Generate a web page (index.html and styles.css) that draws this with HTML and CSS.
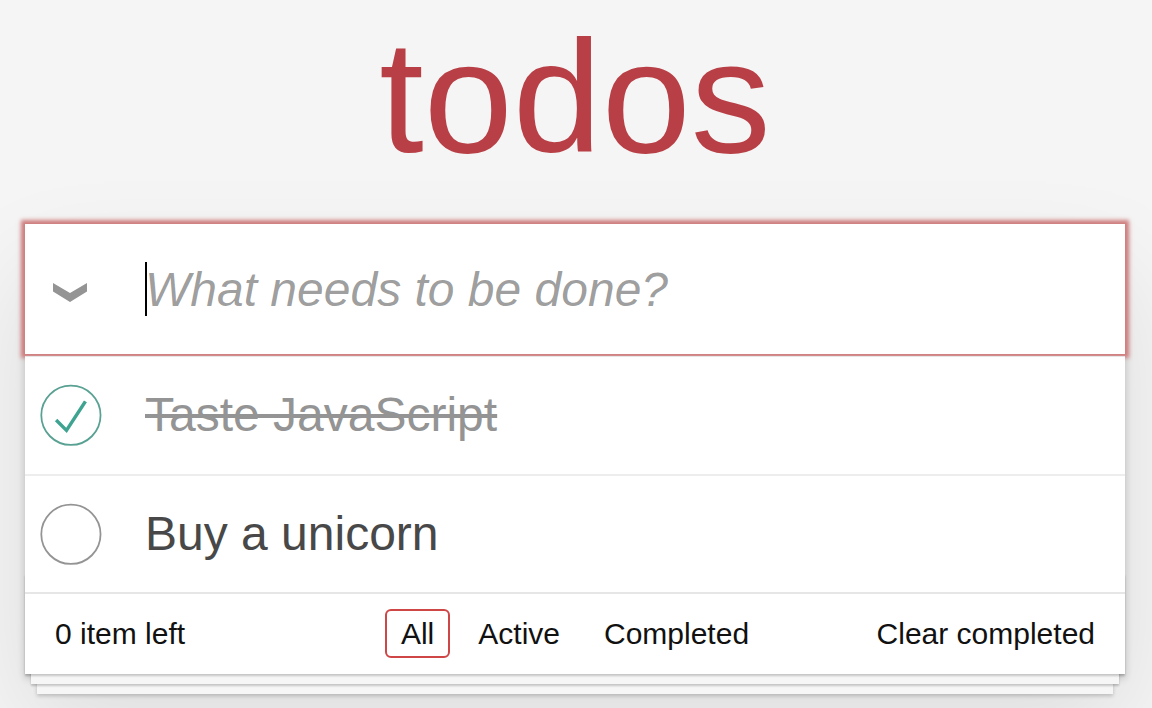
FILE: index.html
```html
<!DOCTYPE html>
<html lang="en">
<head>
<meta charset="utf-8">
<title>TodoMVC</title>
<link rel="stylesheet" href="styles.css">
</head>
<body>
<h1 class="title">todos</h1>
<section class="todoapp">
  <header class="new-row">
    <label class="toggle-all" aria-label="Mark all as complete">
      <svg class="chevron" width="36" height="22" viewBox="0 0 36 22" aria-hidden="true"><polygon points="1,2 18,12 35,2 35,10.5 18,21 1,10.5" fill="#949494"/></svg>
    </label>
    <span class="caret"></span>
    <input class="new-todo" type="text" placeholder="What needs to be done?">
  </header>
  <section class="main">
    <ul class="todo-list">
      <li class="completed">
        <svg class="toggle" width="80" height="80" viewBox="-10 -18 100 135" aria-hidden="true"><circle cx="50" cy="50" r="50" fill="none" stroke="#59A193" stroke-width="3"/><path fill="#3EA390" d="M72 25L42 71 27 56l-4 4 20 20 34-52z"/></svg>
        <label>Taste JavaScript</label>
      </li>
      <li>
        <svg class="toggle" width="80" height="80" viewBox="-10 -18 100 135" aria-hidden="true"><circle cx="50" cy="50" r="50" fill="none" stroke="#949494" stroke-width="3"/></svg>
        <label>Buy a unicorn</label>
      </li>
    </ul>
  </section>
  <footer class="footer">
    <span class="todo-count"><strong>0</strong> item left</span>
    <ul class="filters"><li><a class="selected" href="#/">All</a></li><li><a href="#/active">Active</a></li><li><a href="#/completed">Completed</a></li></ul>
    <button class="clear-completed" type="button">Clear completed</button>
  </footer>
</section>
</body>
</html>
```

FILE: styles.css
```css
html, body {
  margin: 0;
  padding: 0;
}

body {
  background: #f5f5f5;
  font-family: "Liberation Sans", Arial, Helvetica, sans-serif;
  font-size: 28px;
  line-height: 39.2px;
  font-weight: 300;
  color: #111111;
  -webkit-font-smoothing: antialiased;
  min-height: 100vh;
  padding-right: 2px;
}

.title {
  margin: 0 0 31px 0;
  text-align: center;
  font-size: 160px;
  line-height: 193px;
  font-weight: 200;
  color: #b83f45;
  text-rendering: optimizeLegibility;
}

.todoapp {
  width: 1100px;
  margin: 0 auto;
  background: #fff;
  box-shadow: 0 4px 8px 0 rgba(0, 0, 0, 0.2), 0 50px 100px 0 rgba(0, 0, 0, 0.1);
}

/* header row with the input */
.new-row {
  display: flex;
  align-items: center;
  height: 130px;
  background: #fff;
  box-shadow: 0 0 4px 4px #cf7d7d;
}

.toggle-all {
  flex: none;
  width: 120px;
  box-sizing: border-box;
  padding-left: 27px;
  display: flex;
  align-items: center;
}

.chevron {
  display: block;
  margin-top: 6px;
}

.caret {
  flex: none;
  width: 2px;
  height: 54px;
  margin-right: -2px;
  background: #000;
}

.new-todo {
  flex: 1;
  min-width: 0;
  height: 130px;
  margin: 0;
  padding: 0 32px 0 0;
  border: none;
  outline: none;
  background: transparent;
  font-family: inherit;
  font-size: 48px;
  color: #484848;
  caret-color: transparent;
}

.new-todo::placeholder {
  font-style: italic;
  font-weight: 400;
  color: rgba(0, 0, 0, 0.4);
}

/* list */
.main {
  margin-top: 2px;
  border-top: 1px solid #e6e6e6;
  background: #fff;
}

.todo-list {
  margin: 0;
  padding: 0;
  list-style: none;
}

.todo-list li {
  display: flex;
  align-items: center;
  font-size: 48px;
  border-bottom: 2px solid #ededed;
}

.todo-list li:last-child {
  border-bottom: none;
}

.toggle {
  flex: none;
  display: block;
}

.todo-list label {
  display: block;
  flex: 1;
  padding: 30px 30px 30px 40px;
  line-height: 56.5px;
  color: #484848;
  font-weight: 400;
  word-break: break-all;
}

.todo-list li.completed label {
  color: #949494;
  text-decoration: line-through;
}

/* footer */
.footer {
  position: relative;
  display: grid;
  grid-template-columns: 1fr auto 1fr;
  align-items: start;
  height: 40px;
  padding: 20px 30px;
  font-size: 30px;
  line-height: 39.2px;
  border-top: 2px solid #e6e6e6;
}

.footer::before {
  content: "";
  position: absolute;
  left: 0;
  right: 0;
  bottom: 0;
  height: 100px;
  overflow: hidden;
  pointer-events: none;
  box-shadow: 0 2px 2px rgba(0, 0, 0, 0.2),
              0 16px 0 -6px #f6f6f6,
              0 18px 2px -6px rgba(0, 0, 0, 0.2),
              0 32px 0 -12px #f6f6f6,
              0 34px 4px -12px rgba(0, 0, 0, 0.2);
}

.todo-count {
  justify-self: start;
  text-align: left;
}

.todo-count strong {
  font-weight: 300;
}

.filters {
  display: flex;
  margin: 0;
  padding: 0;
  list-style: none;
}

.filters li {
  display: block;
}

.filters a {
  color: inherit;
  margin: 6px;
  padding: 6px 14px;
  text-decoration: none;
  border: 2px solid transparent;
  border-radius: 6px;
}

.filters a.selected {
  border-color: #ce4646;
}

.clear-completed {
  justify-self: end;
  margin: 0;
  padding: 0;
  border: 0;
  background: none;
  font-family: inherit;
  font-size: 100%;
  font-weight: inherit;
  color: inherit;
  line-height: 40px;
  cursor: pointer;
}
```
